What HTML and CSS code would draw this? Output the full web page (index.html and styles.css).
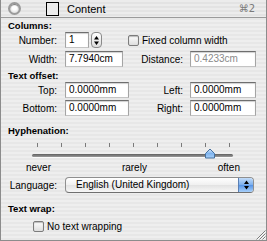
FILE: index.html
```html
<html>
<head>
    <title>Content</title>
    <link rel="stylesheet" href="styles.css">
</head>
<body>
<div class="window">
    <div class="titlebar">
        <span class="close"></span>
        <span class="titlebox"></span>
        <span class="title">Content</span>
        <span class="shortcut">&#8984;2</span>
    </div>
    <div class="panel">
        <div class="heading h-cols">Columns:</div>
        <div class="row">
            <span class="lbl">Number:</span>
            <span class="field w-num">1</span>
            <span class="stepper">
                <svg width="5" height="11" viewBox="0 0 5 11"><path d="M2.5 1 L5 4.5 L0 4.5 Z M2.5 10 L5 6.5 L0 6.5 Z" fill="#000"/></svg>
            </span>
            <span class="check check-fixed"></span>
            <span class="check-text">Fixed column width</span>
        </div>
        <div class="row row-gap">
            <span class="lbl">Width:</span>
            <span class="field w-width">7.7940cm</span>
            <span class="lbl2 l2-dist">Distance:</span>
            <span class="field w-right disabled">0.4233cm</span>
        </div>

        <div class="heading h-offset">Text offset:</div>
        <div class="row">
            <span class="lbl">Top:</span>
            <span class="field w-off">0.0000mm</span>
            <span class="lbl2 l2-off">Left:</span>
            <span class="field w-right">0.0000mm</span>
        </div>
        <div class="row row-gap2">
            <span class="lbl">Bottom:</span>
            <span class="field w-off">0.0000mm</span>
            <span class="lbl2 l2-off">Right:</span>
            <span class="field w-right">0.0000mm</span>
        </div>

        <div class="heading h-hyph">Hyphenation:</div>
        <div class="ticks">
            <i></i><i></i><i></i><i></i><i></i><i></i><i></i><i></i><i></i>
        </div>
        <div class="slider">
            <div class="track"></div>
            <svg class="thumb" width="12" height="11" viewBox="0 0 12 11">
                <defs>
                    <linearGradient id="tg" x1="0" y1="0" x2="0" y2="1">
                        <stop offset="0" stop-color="#d6e8fb"/>
                        <stop offset="0.5" stop-color="#7fb4ee"/>
                        <stop offset="1" stop-color="#a9d0fa"/>
                    </linearGradient>
                </defs>
                <path d="M1.5 10 L1.5 5.5 L6 1 L10.5 5.5 L10.5 10 Z" fill="url(#tg)" stroke="#44709f" stroke-linejoin="round"/>
            </svg>
        </div>
        <div class="scale">
            <span>never</span>
            <span>rarely</span>
            <span>often</span>
        </div>
        <div class="row row-lang">
            <span class="lbl">Language:</span>
            <span class="popup">
                <span class="popup-text">English (United Kingdom)</span>
                <span class="popup-arrows">
                    <svg width="5" height="10" viewBox="0 0 5 10"><path d="M2.5 0.5 L5 4 L0 4 Z M2.5 9.5 L5 6 L0 6 Z" fill="#000"/></svg>
                </span>
            </span>
        </div>

        <div class="heading h-wrap">Text wrap:</div>
        <div class="row row-wrap">
            <span class="check check-wrap"></span>
            <span class="check-text">No text wrapping</span>
        </div>
    </div>
    <svg class="grip" width="11" height="11" viewBox="0 0 11 11">
        <path d="M10.5 1.5 L1.5 10.5 M10.5 4.5 L4.5 10.5 M10.5 7.5 L7.5 10.5" stroke="#7d7d7d" stroke-width="1"/>
        <path d="M10.5 2.5 L2.5 10.5 M10.5 5.5 L5.5 10.5 M10.5 8.5 L8.5 10.5" stroke="#fafafa" stroke-width="1"/>
    </svg>
</div>
</body>
</html>
```

FILE: styles.css
```css
body {
    margin: 0;
    font-family: "Liberation Sans", Arial, sans-serif;
    font-size: 10px;
    color: #000;
    background: #fff;
}
.window {
    position: relative;
    width: 267px;
    height: 241px;
    box-sizing: border-box;
    border: 1px solid #8c8c8c;
    border-top: none;
    background: repeating-linear-gradient(#eeeeee 0 2px, #e7e7e7 2px 4px);
    overflow: hidden;
}
.titlebar {
    height: 17px;
    border-bottom: 1px solid #9a9a9a;
    display: flex;
    align-items: center;
    background: repeating-linear-gradient(#ececec 0 2px, #e3e3e3 2px 4px);
}
.close {
    width: 9px;
    height: 9px;
    margin-left: 7px;
    border-radius: 50%;
    border: 2px solid #9b9b9b;
    background: radial-gradient(circle at 50% 40%, #ffffff 30%, #cfcfcf 100%);
    box-shadow: inset 0 1px 1px #777;
}
.titlebox {
    width: 11px;
    height: 12px;
    margin-left: 25px;
    border: 1px solid #000;
    background: #ededed;
}
.title {
    margin-left: 8px;
    font-size: 11px;
}
.shortcut {
    margin-left: auto;
    margin-right: 11px;
    font-family: "DejaVu Sans", sans-serif;
    font-size: 10px;
    color: #7a7a7a;
}
.panel {
    padding-left: 7px;
}
.heading {
    font-weight: bold;
    font-size: 9.5px;
    height: 12px;
    line-height: 12px;
}
.h-cols { margin-top: 2px; }
.h-offset { margin-top: 3px; }
.h-hyph { margin-top: 9px; }
.h-wrap { margin-top: 10px; }
.row {
    display: flex;
    align-items: center;
    height: 16px;
}
.row-gap { margin-top: 3px; }
.row-gap2 { margin-top: 2px; }
.lbl {
    width: 49px;
    margin-right: 8px;
    text-align: right;
}
.lbl2 {
    text-align: right;
    margin-right: 7px;
}
.l2-dist { width: 60px; }
.l2-off { width: 54px; }
.field {
    height: 16px;
    box-sizing: border-box;
    line-height: 14px;
    padding-left: 3px;
    background: #fff;
    border: 1px solid #a4a4a4;
    border-top-color: #6e6e6e;
    border-bottom-color: #c4c4c4;
    box-shadow: inset 0 1px 1px #d0d0d0;
    white-space: nowrap;
}
.disabled {
    color: #8a8a8a;
}
.w-num { width: 24px; }
.w-width { width: 58px; }
.w-off { width: 64px; }
.w-right { width: 66px; }
.stepper {
    width: 11px;
    height: 16px;
    margin-left: 2px;
    box-sizing: border-box;
    border: 1px solid #8a8a8a;
    border-radius: 4px;
    background: linear-gradient(#ffffff, #dcdcdc);
    display: flex;
    align-items: center;
    justify-content: center;
}
.check {
    width: 11px;
    height: 11px;
    box-sizing: border-box;
    border: 1px solid #7c7c7c;
    border-radius: 2px;
    background: linear-gradient(#fdfdfd, #dedede);
    box-shadow: inset 0 1px 1px #bbb;
}
.check-fixed { margin-left: 26px; }
.check-text { margin-left: 3px; }
.ticks {
    margin-top: 6px;
    margin-left: 29px;
    width: 193px;
    height: 4px;
    display: flex;
    justify-content: space-between;
}
.ticks i {
    width: 1px;
    height: 4px;
    background: #7a7a7a;
}
.slider {
    position: relative;
    margin-top: 2px;
    height: 10px;
}
.track {
    position: relative;
    top: 5px;
    margin-left: 24px;
    width: 201px;
    height: 3px;
    border-radius: 2px;
    background: linear-gradient(#5e5e5e, #9a9a9a);
    box-shadow: 0 1px 0 #fafafa;
}
.thumb {
    position: absolute;
    left: 196px;
    top: -1px;
}
.scale {
    margin-top: 3px;
    margin-left: 18px;
    width: 214px;
    height: 12px;
    line-height: 12px;
    display: flex;
    justify-content: space-between;
}
.row-lang { margin-top: 3px; }
.popup {
    width: 189px;
    height: 16px;
    box-sizing: border-box;
    border: 1px solid #8f8f8f;
    border-bottom-color: #707070;
    border-radius: 4px;
    background: linear-gradient(#ffffff, #f0f0f0 50%, #e2e2e2 51%, #f7f7f7);
    display: flex;
    align-items: center;
    overflow: hidden;
}
.popup-text {
    flex: 1;
    padding-left: 10px;
    line-height: 14px;
}
.popup-arrows {
    width: 14px;
    height: 14px;
    border-left: 1px solid #5a7fb4;
    background: linear-gradient(#c3dcf8, #7aaeee 50%, #5593e6 51%, #a8d0fa);
    display: flex;
    align-items: center;
    justify-content: center;
}
.row-wrap {
    margin-top: 5px;
    height: 13px;
    padding-left: 25px;
}
.grip {
    position: absolute;
    right: 0;
    bottom: 0;
}
```
